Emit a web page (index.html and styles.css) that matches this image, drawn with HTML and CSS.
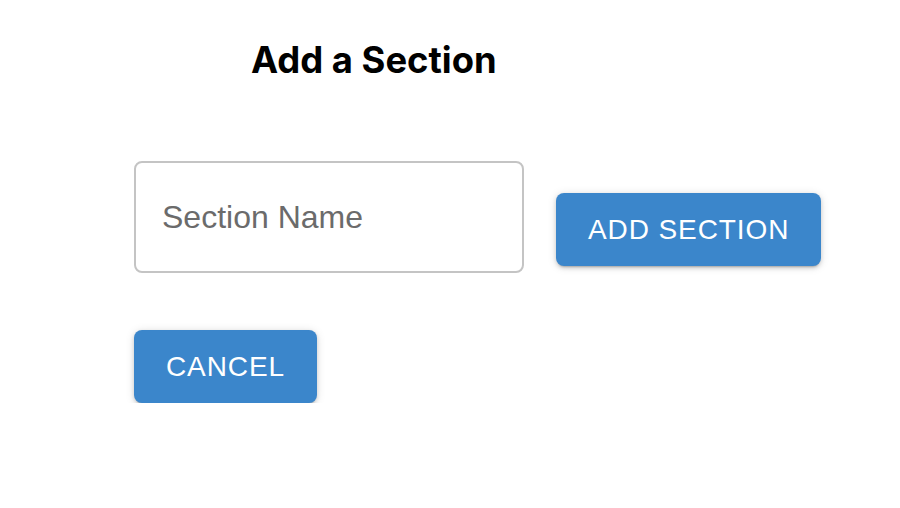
FILE: index.html
```html
<!DOCTYPE html>
<html>
<head>
<meta charset="utf-8">
<link rel="stylesheet" href="styles.css">
</head>
<body>
<div class="page">
  <h2 class="title">Add a Section</h2>
  <div class="row">
    <div class="field">
      <input class="input" type="text" placeholder="Section Name">
    </div>
    <button class="btn btn-add">ADD SECTION</button>
  </div>
  <div class="actions">
    <button class="btn">CANCEL</button>
  </div>
</div>
</body>
</html>
```

FILE: styles.css
```css
html, body {
  margin: 0;
  padding: 0;
  background: #ffffff;
}

.page {
  padding: 37px 0 0 134px;
}

.title {
  margin: 0 0 0 117px;
  font-family: Inter, "Liberation Sans", sans-serif;
  font-weight: 700;
  font-size: 36.4px;
  line-height: 46px;
  color: #000000;
}

.row {
  display: flex;
  align-items: flex-start;
  gap: 32px;
  margin-top: 78px;
}

.field {
  width: 390px;
}

.input {
  box-sizing: border-box;
  width: 390px;
  height: 112px;
  margin: 0;
  padding: 0 26px;
  border: 2px solid #c4c4c4;
  border-radius: 8px;
  font-family: "Liberation Sans", Arial, sans-serif;
  font-size: 32px;
  color: #222;
  outline: none;
  background: #fff;
}

.input::placeholder {
  color: #6b6b6b;
  opacity: 1;
}

.btn {
  box-sizing: border-box;
  height: 73px;
  padding: 0 32px;
  border: none;
  border-radius: 8px;
  background: #3b86cb;
  color: #ffffff;
  font-family: "Liberation Sans", Arial, sans-serif;
  font-size: 28px;
  letter-spacing: 0.9px;
  cursor: pointer;
  box-shadow: 0 3px 2px -2px rgba(0,0,0,0.2), 0 2px 4px 0 rgba(0,0,0,0.14), 0 1px 10px 0 rgba(0,0,0,0.12);
}

.btn-add {
  margin-top: 32px;
}

.actions {
  margin-top: 57px;
}
```
